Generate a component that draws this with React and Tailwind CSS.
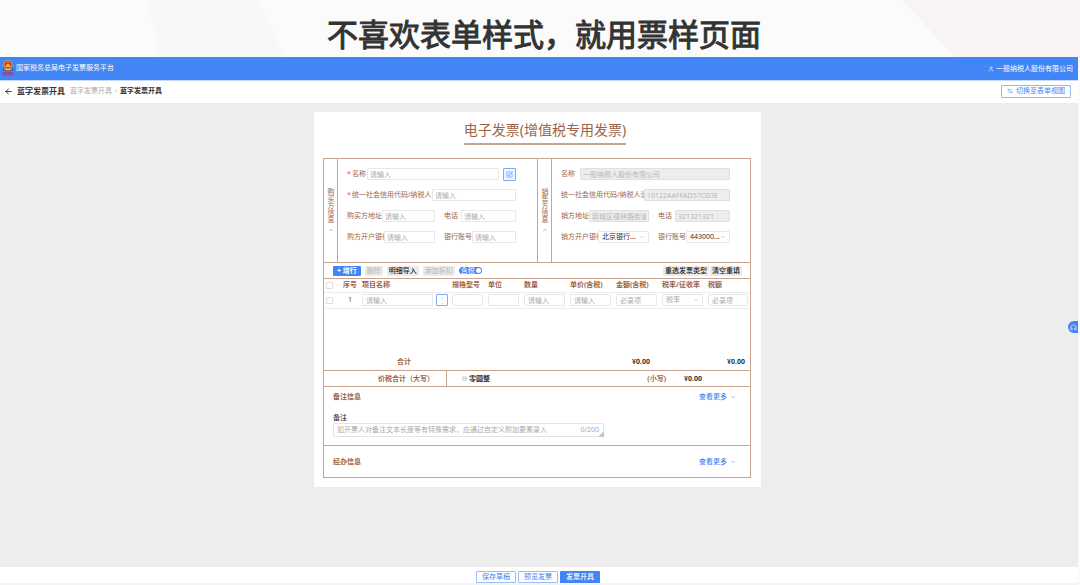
import React from 'react';
import { ArrowLeft, ArrowLeftRight, ChevronDown, ChevronRight, ChevronUp, CircleX, Headphones, SquarePen, User } from 'lucide-react';

function Emblem() {
  return (
    <svg viewBox="0 0 24 34" className="h-4 w-3 shrink-0" aria-hidden="true">
      <circle cx="12" cy="10" r="9.5" fill="#f0a030" />
      <circle cx="12" cy="10" r="7.5" fill="#d8301c" />
      <path d="M7 12h10v3H7zM9 9h6l1 3H8z" fill="#f5b942" />
      <circle cx="12" cy="6" r="1.4" fill="#f5d04a" />
      <path d="M2 16c3 5 17 5 20 0l1 5c-4 4-18 4-22 0z" fill="#454b66" />
      <path d="M4 17c3 3 13 3 16 0v3c-4 3-12 3-16 0z" fill="#d9b08c" />
      <path d="M1 27h22M1 31h22" stroke="#8a3f92" strokeWidth="3" strokeDasharray="4 1" />
    </svg>
  );
}

function Field({ id, label, required, className, labelClass = '', disabled, value, options, action }) {
  return (
    <div className={`flex h-3 items-center ${className || ''}`}>
      {required && <span className="w-[5px] shrink-0 text-[#e05a4e]">*</span>}
      <label htmlFor={id} className={`shrink-0 overflow-hidden whitespace-nowrap text-[#9c6549] ${labelClass}`}>
        {label}
      </label>
      {options ? (
        <span className="relative flex h-full min-w-0 flex-1">
          <select id={id} className="w-full appearance-none rounded-[1px] border border-[#e6e6e6] bg-white pr-2 pl-[3px] text-[#333]">
            {options.map((o) => (
              <option key={o}>{o}</option>
            ))}
          </select>
          <ChevronDown className="pointer-events-none absolute top-[3px] right-1 size-[6px] text-[#aaa]" />
        </span>
      ) : (
        <input
          id={id}
          placeholder="请输入"
          defaultValue={value}
          disabled={disabled}
          className="h-full min-w-0 flex-1 rounded-[1px] border border-[#e8e8e8] bg-white px-[2px] placeholder:text-[#aaa] disabled:border-[#e0e0e0] disabled:bg-[#ededed] disabled:text-[#b8b8b8]"
        />
      )}
      {action}
    </div>
  );
}

function SideLabel({ children }) {
  return (
    <button type="button" className="flex w-[14px] shrink-0 flex-col items-center justify-center border-r border-[#cba48f] text-[#9c6549]">
      <span className="leading-none [writing-mode:vertical-rl]">{children}</span>
      <ChevronUp className="mt-1 size-[6px]" />
    </button>
  );
}

function CellInput({ label, placeholder }) {
  return (
    <input
      aria-label={label}
      placeholder={placeholder}
      className="block h-3 w-full min-w-0 rounded-[1px] border border-[#e8e8e8] bg-white px-[3px] placeholder:text-[#aaa]"
    />
  );
}

function ToolButton({ children, muted }) {
  return (
    <button type="button" disabled={muted} className="h-[10px] bg-[#ebebeb] px-[2px] font-medium text-[#222] disabled:text-[#bdbdbd]">
      {children}
    </button>
  );
}

function More() {
  return (
    <button type="button" className="flex items-center gap-[3px] font-medium text-[#4285f4]">
      查看更多
      <ChevronDown className="size-[6px]" />
    </button>
  );
}

const COLUMNS = ['规格型号', '单位', '数量', '单价(含税)', '金额(含税)', '税率/征收率', '税额'];

export default function App() {
  return (
    <div className="flex min-h-screen flex-col bg-[#fbfbfb] font-['Noto_Sans','Noto_Sans_CJK_SC',sans-serif] text-[7px] leading-[10px] text-[#333]">
      <div className="relative flex h-[57px] items-center justify-center pt-2 pl-2">
        <svg viewBox="0 0 1080 57" preserveAspectRatio="none" className="absolute inset-0 h-full w-full" aria-hidden="true">
          <path d="M148 0H258L284 57H159z" fill="#f8f8f8" />
          <path d="M903 0H1080V57H954z" fill="#f9f3f3" />
        </svg>
        <h1 className="relative font-['Noto_Sans_CJK_SC',sans-serif] text-[31px] leading-9 font-normal text-[#333] [-webkit-text-stroke:1px_#333]">不喜欢表单样式，就用票样页面</h1>
      </div>

      <div className="mr-[2px] flex flex-1 flex-col">
        <header className="flex h-[23px] items-center justify-between bg-[#4285f4] pr-[5px] pl-[2px] text-white">
          <div className="flex items-center gap-[2px] pb-[2px]">
            <Emblem />
            <span>国家税务总局电子发票服务平台</span>
          </div>
          <a href="#account" className="flex items-center gap-[2px]">
            <User className="size-[6px]" />
            一般纳税人股份有限公司
          </a>
        </header>

        <div className="flex h-[23px] items-center justify-between border-t border-[#c4d9fb] bg-white pr-[7px] pb-[2px] pl-1">
          <div className="flex items-center">
            <button type="button" aria-label="返回" className="mr-1">
              <ArrowLeft className="size-[9px]" strokeWidth={2.5} />
            </button>
            <h2 className="text-[8px] font-bold">蓝字发票开具</h2>
            <nav className="ml-[5px] flex items-center gap-px">
              <a href="#list" className="text-[#aaa]">蓝字发票开具</a>
              <ChevronRight className="size-[6px] text-[#aaa]" />
              <span className="font-bold">蓝字发票开具</span>
            </nav>
          </div>
          <button type="button" className="flex h-[13px] items-center gap-[3px] rounded-[1px] border border-[#8fb6f7] px-[5px] text-[#4285f4]">
            <ArrowLeftRight className="size-[6px]" />
            切换至表单视图
          </button>
        </div>

        <main className="relative flex-1 bg-[#ededed] pt-[9px] pr-[3px]">
          <section className="mx-auto w-full max-w-[447px] bg-white pt-2 pr-[10px] pb-[9px] pl-[9px]">
            <div className="flex justify-center pb-[13px] pl-4">
              <h3 className="border-b-2 border-[#cba48f] pb-[3px] text-[14px] leading-5 text-[#9c6549]">
                电子发票(增值税专用发票)
              </h3>
            </div>

            <form className="border border-[#cba48f]" onSubmit={(e) => e.preventDefault()}>
              <div className="flex border-b border-[#cba48f]">
                <SideLabel>购买方信息</SideLabel>
                <div className="flex min-w-0 flex-1 flex-col gap-[9px] pt-[9px] pr-[21px] pb-[19px] pl-[9px]">
                  <Field
                    id="buyer-name"
                    label="名称"
                    required
                    labelClass="mr-px"
                    action={
                      <button type="button" aria-label="选择购买方" className="ml-1 flex size-[13px] shrink-0 items-center justify-center rounded-[1px] border border-[#7dacf7] bg-[#eef4fe] text-[#4285f4]">
                        <SquarePen className="size-[7px]" />
                      </button>
                    }
                  />
                  <Field id="buyer-tax" label="统一社会信用代码/纳税人" required labelClass="w-[80px]" />
                  <div className="flex gap-[9px]">
                    <Field id="buyer-addr" label="购买方地址" labelClass="w-[35px]" className="w-[88px]" />
                    <Field id="buyer-tel" label="电话" labelClass="w-[17px]" className="min-w-0 flex-1" />
                  </div>
                  <div className="flex gap-[9px]">
                    <Field id="buyer-bank" label="购方开户银行" labelClass="w-[37px]" className="w-[88px]" />
                    <Field id="buyer-acct" label="银行账号" labelClass="w-[28px]" className="min-w-0 flex-1" />
                  </div>
                </div>
                <div className="flex border-l border-[#cba48f]">
                  <SideLabel>销售方信息</SideLabel>
                </div>
                <div className="flex min-w-0 flex-1 flex-col gap-[9px] pt-[9px] pr-[20px] pb-[19px] pl-[9px]">
                  <Field id="seller-name" label="名称" labelClass="w-[19px]" disabled value="一般纳税人股份有限公司" />
                  <Field id="seller-tax" label="统一社会信用代码/纳税人识别号" labelClass="w-[83px]" disabled value="10122AAFFAD57CD3E" />
                  <div className="flex gap-[9px]">
                    <Field id="seller-addr" label="销方地址" labelClass="w-[28px]" className="w-[88px]" disabled value="新城区德林路街道" />
                    <Field id="seller-tel" label="电话" labelClass="w-[17px]" className="min-w-0 flex-1" disabled value="321321321" />
                  </div>
                  <div className="flex gap-[9px]">
                    <Field id="seller-bank" label="销方开户银行" labelClass="w-[37px]" className="w-[88px]" options={['北京银行...']} />
                    <Field id="seller-acct" label="银行账号" labelClass="w-[28px]" className="min-w-0 flex-1" options={['443000...']} />
                  </div>
                </div>
              </div>

              <div className="flex h-4 items-center justify-between border-b border-[#cba48f] pr-2 pl-[9px]">
                <div className="flex items-center gap-1">
                  <button type="button" className="h-[10px] rounded-[1px] bg-[#4285f4] px-1 font-bold text-white">+ 增行</button>
                  <ToolButton muted>删除</ToolButton>
                  <ToolButton>明细导入</ToolButton>
                  <ToolButton muted>添加折扣</ToolButton>
                  <button type="button" role="switch" aria-checked="true" className="flex h-[7px] items-center rounded-full bg-[#4285f4] pr-px pl-[2px] text-white">
                    含税
                    <span className="ml-px size-[5px] rounded-full bg-white" />
                  </button>
                </div>
                <div className="flex items-center gap-px">
                  <ToolButton>重选发票类型</ToolButton>
                  <ToolButton>清空重填</ToolButton>
                </div>
              </div>

              <table className="w-full table-fixed border-collapse">
                <colgroup>
                  <col className="w-[14px]" />
                  <col className="w-[24px]" />
                  <col />
                  <col className="w-[36px]" />
                  <col className="w-[36px]" />
                  <col className="w-[46px]" />
                  <col className="w-[46px]" />
                  <col className="w-[46px]" />
                  <col className="w-[46px]" />
                  <col className="w-[42px]" />
                </colgroup>
                <thead>
                  <tr className="h-[13px] border-b border-[#eee] text-left whitespace-nowrap text-[#9c6549]">
                    <th className="pl-[2px]">
                      <input type="checkbox" aria-label="全选" className="block size-[7px] appearance-none rounded-[1px] border border-[#ddd]" />
                    </th>
                    <th className="text-center font-bold">序号</th>
                    <th className="font-bold">项目名称</th>
                    {COLUMNS.map((c) => (
                      <th key={c} className="font-bold">{c}</th>
                    ))}
                  </tr>
                </thead>
                <tbody>
                  <tr className="h-4 border-b border-[#eee]">
                    <td className="pl-[2px]">
                      <input type="checkbox" aria-label="选择第1行" className="block size-[7px] appearance-none rounded-[1px] border border-[#ddd]" />
                    </td>
                    <td className="text-center text-[#555]">1</td>
                    <td className="pr-1">
                      <div className="flex gap-[3px]">
                        <CellInput label="项目名称" placeholder="请输入" />
                        <button type="button" aria-label="选择项目" className="size-3 shrink-0 rounded-[1px] border border-[#7dacf7] leading-[9px] text-[#8fb6f7]">⋮</button>
                      </div>
                    </td>
                    <td className="pr-[5px]"><CellInput label="规格型号" /></td>
                    <td className="pr-[5px]"><CellInput label="单位" /></td>
                    <td className="pr-[5px]"><CellInput label="数量" placeholder="请输入" /></td>
                    <td className="pr-[5px]"><CellInput label="单价" placeholder="请输入" /></td>
                    <td className="pr-[5px]"><CellInput label="金额" placeholder="必录项" /></td>
                    <td className="pr-[5px]">
                      <span className="relative block">
                        <select aria-label="税率" className="block h-3 w-full appearance-none rounded-[1px] border border-[#e8e8e8] bg-white px-[3px] text-[#aaa]">
                          <option>税率</option>
                        </select>
                        <ChevronDown className="pointer-events-none absolute top-[3px] right-1 size-[6px] text-[#aaa]" />
                      </span>
                    </td>
                    <td className="pr-[2px]"><CellInput label="税额" placeholder="必录项" /></td>
                  </tr>
                </tbody>
                <tfoot>
                  <tr className="h-[62px] align-bottom">
                    <td colSpan={3} className="pb-[3px] pl-8 text-center font-bold text-[#9c6549]">合计</td>
                    <td colSpan={5} className="pr-3 pb-[3px] text-right font-bold">¥0.00</td>
                    <td colSpan={2} className="pr-[5px] pb-[3px] text-right font-bold">¥0.00</td>
                  </tr>
                </tfoot>
              </table>

              <div className="flex h-[17px] items-stretch border-y border-[#cba48f]">
                <div className="flex w-[123px] items-center justify-end border-r border-[#cba48f] pr-3 font-bold text-[#9c6549]">价税合计（大写）</div>
                <div className="flex flex-1 items-center gap-[2px] pl-[15px] font-bold">
                  <CircleX className="size-[5px] text-[#888]" />
                  零圆整
                </div>
                <div className="flex items-center gap-[18px] pr-12">
                  <span className="font-bold text-[#9c6549]">(小写)</span>
                  <span className="font-bold">¥0.00</span>
                </div>
              </div>

              <div className="border-b border-[#cba48f] pt-[5px] pr-[14px] pb-2 pl-[9px]">
                <div className="flex items-center justify-between">
                  <h4 className="font-bold text-[#9c6549]">备注信息</h4>
                  <More />
                </div>
                <label htmlFor="remark" className="mt-[11px] block font-medium">备注</label>
                <div className="relative max-w-[271px]">
                  <textarea
                    id="remark"
                    rows={1}
                    maxLength={200}
                    placeholder="如开票人对备注文本长度等有特殊需求，应通过自定义附加要素录入"
                    className="block h-[14px] w-full resize-none overflow-hidden rounded-[1px] border border-[#e4e4e4] py-px pr-7 pl-[3px] placeholder:text-[#aaa]"
                  />
                  <span className="absolute top-[2px] right-[5px] text-[#aaa]">0/200</span>
                  <svg viewBox="0 0 6 6" className="absolute right-0 bottom-0 size-[6px]" aria-hidden="true">
                    <path d="M6 0V6H0z" fill="#c4c4c4" />
                  </svg>
                </div>
              </div>

              <div className="flex h-[31px] items-center justify-between pr-[14px] pl-[9px]">
                <h4 className="font-bold text-[#9c6549]">经办信息</h4>
                <More />
              </div>
            </form>
          </section>

          <button type="button" aria-label="客服" className="absolute top-[218px] right-0 flex h-3 w-[10px] items-center justify-center rounded-l-full bg-[#4285f4] text-white">
            <Headphones className="size-[7px]" />
          </button>
        </main>

        <footer className="flex h-[18px] items-end justify-center gap-[2px] border-b-2 border-[#f3f4f8] bg-white pt-1 pr-[2px]">
          <button type="button" className="h-3 w-10 rounded-t-[1px] border border-[#9bbef8] text-[#4285f4]">保存草稿</button>
          <button type="button" className="h-3 w-10 rounded-t-[1px] border border-[#9bbef8] text-[#4285f4]">预览发票</button>
          <button type="button" className="h-3 w-10 rounded-t-[1px] bg-[#4285f4] font-medium text-white">发票开具</button>
        </footer>
      </div>
    </div>
  );
}
